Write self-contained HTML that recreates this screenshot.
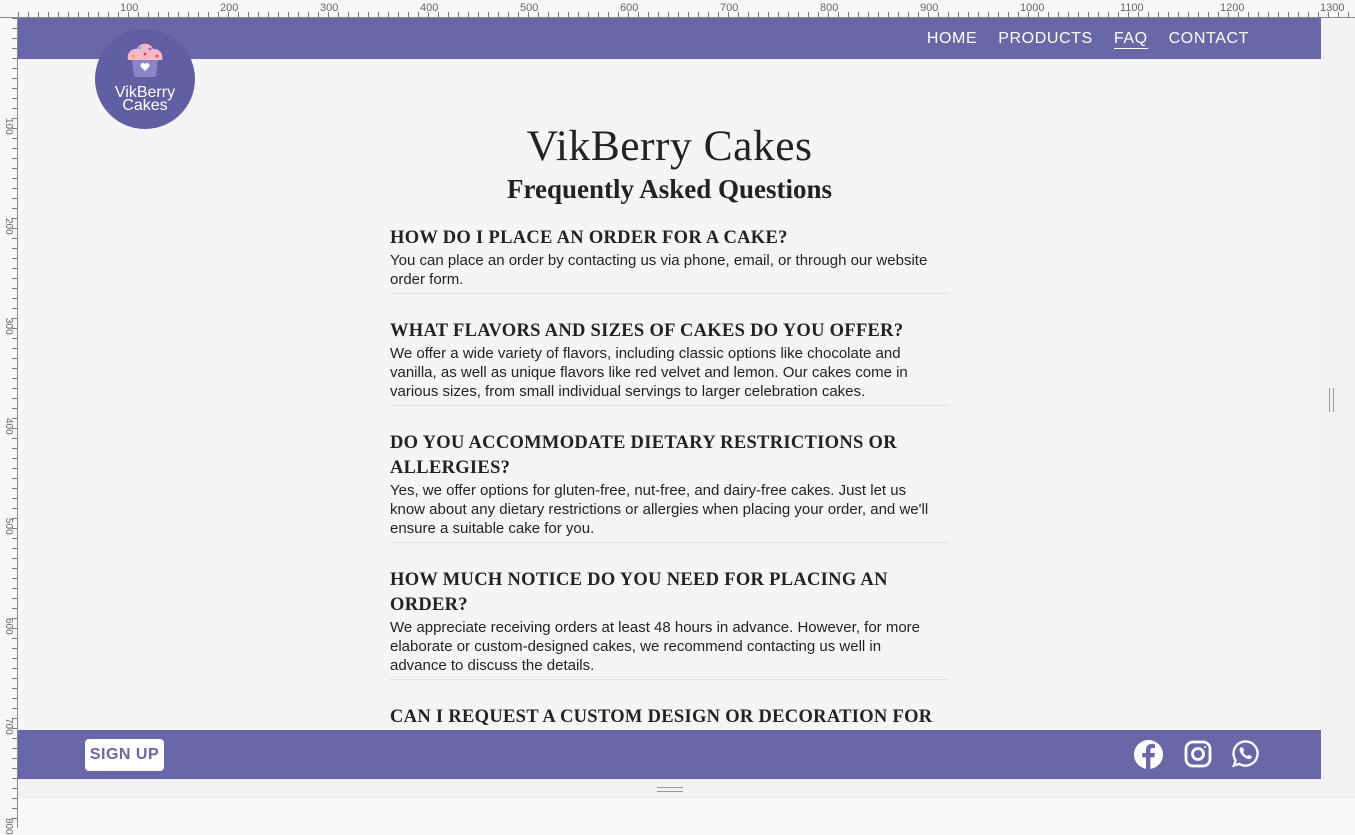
<!DOCTYPE html>
<html><head><meta charset="utf-8"><style>
*{margin:0;padding:0;box-sizing:border-box}
body{width:1355px;height:828px;overflow:hidden;background:#f9f9f9;position:relative;font-family:"Liberation Sans",sans-serif}
.rt{position:absolute;left:0;top:0;width:1355px;height:18px;background:#f7f7f7;border-bottom:1px solid #888;
background-image:repeating-linear-gradient(90deg,#777 0 1px,transparent 1px 10px);background-size:100% 6px;background-repeat:no-repeat;background-position:18px 12px}
.rl{position:absolute;left:0;top:18px;width:18px;height:810px;background:#f7f7f7;border-right:1px solid #888;
background-image:repeating-linear-gradient(180deg,#777 0 1px,transparent 1px 10px);background-size:6px 100%;background-repeat:no-repeat;background-position:12px 0}
.rt span{position:absolute;top:2px;font-size:11px;color:#666}
.rl span{position:absolute;left:2px;font-size:10px;color:#666;transform:rotate(90deg);transform-origin:left top}
.side{position:absolute;left:1321px;top:18px;width:34px;height:780px;background:#f2f2f2}
.bot{position:absolute;left:18px;top:779px;width:1303px;height:19px;background:#f2f2f2}
.page{position:absolute;left:18px;top:18px;width:1303px;height:761px;background:#f5f5f5;overflow:hidden}
.hdr{position:absolute;left:0;top:0;width:1303px;height:41px;background:#6a67a8}
.nav{position:absolute;right:72px;top:12px;color:#fff;font-size:16px;letter-spacing:.6px}
.nav span{margin-left:21px}
.nav .a{border-bottom:1px solid #fff;padding-bottom:1px}
.logo{position:absolute;left:77px;top:11px;width:100px;height:100px;border-radius:50%;background:#625ea3;color:#fff;text-align:center;font-size:16px;line-height:13px}
.h1{position:absolute;left:0;width:1303px;top:103px;text-align:center;font-family:"Liberation Serif",serif;font-size:43.5px;color:#222;letter-spacing:.5px}
.h2{position:absolute;left:0;width:1303px;top:156px;text-align:center;font-family:"Liberation Serif",serif;font-size:27px;font-weight:bold;color:#222}
.faq{position:absolute;left:372px;top:208px;width:559px}
.q{font-family:"Liberation Serif",serif;font-weight:bold;font-size:18.5px;color:#222;line-height:25px;letter-spacing:.3px}
.an{font-size:15px;line-height:19px;color:#222;padding-bottom:4px;padding-right:16px;border-bottom:1px solid #e2e2e2;margin-bottom:25px}
.ftr{position:absolute;left:0;top:712px;width:1303px;height:49px;background:#6a67a8}
.btn{position:absolute;left:67px;top:9px;width:79px;height:32px;background:#fff;border-radius:4px;color:#6a67a8;font-weight:bold;font-size:16px;text-align:center;line-height:32px;letter-spacing:.5px}
</style></head><body>
<div class="rt"><span style="left:120px">100</span><span style="left:220px">200</span><span style="left:320px">300</span><span style="left:420px">400</span><span style="left:520px">500</span><span style="left:620px">600</span><span style="left:720px">700</span><span style="left:820px">800</span><span style="left:920px">900</span><span style="left:1020px">1000</span><span style="left:1120px">1100</span><span style="left:1220px">1200</span><span style="left:1320px">1300</span></div>
<div class="rl"><span style="top:100px;left:14px">100</span><span style="top:200px;left:14px">200</span><span style="top:300px;left:14px">300</span><span style="top:400px;left:14px">400</span><span style="top:500px;left:14px">500</span><span style="top:600px;left:14px">600</span><span style="top:700px;left:14px">700</span><span style="top:800px;left:14px">800</span></div>
<div class="side"><div style="position:absolute;left:8px;top:370px;width:5px;height:24px;border-left:1px solid #999;border-right:1px solid #999"></div></div>
<div class="bot"><div style="position:absolute;left:639px;top:8px;width:26px;height:5px;border-top:1px solid #999;border-bottom:1px solid #999"></div></div>
<div class="page">
<div class="hdr"><div class="nav"><span>HOME</span><span>PRODUCTS</span><span class="a">FAQ</span><span>CONTACT</span></div></div>
<div class="logo">
<svg width="40" height="40" viewBox="0 0 40 40" style="margin-top:11px;display:block;margin-left:30px"><path d="M3 20 C1 12 8 8 12 9 C14 2 26 2 28 9 C32 8 39 12 37 20 Z" fill="#f9b8c8"/><path d="M7 20 h26 l-2 15 a2 2 0 0 1-2 2 h-18 a2 2 0 0 1-2-2z" fill="#8a86c6"/><path d="M20 31 l-4-4 a2.4 2.4 0 0 1 4-3 a2.4 2.4 0 0 1 4 3z" fill="#fff"/><circle cx="15" cy="8" r="1.4" fill="#3cc"/><circle cx="25" cy="9" r="1.4" fill="#66c"/><circle cx="8" cy="16" r="1.4" fill="#f90"/><circle cx="20" cy="14" r="1.4" fill="#e33"/><circle cx="32" cy="16" r="1.4" fill="#e36"/></svg>
<div style="margin-top:6px">VikBerry<br>Cakes</div></div>
<div class="h1">VikBerry Cakes</div>
<div class="h2">Frequently Asked Questions</div>
<div class="faq">
<div class="q">HOW DO I PLACE AN ORDER FOR A CAKE?</div>
<div class="an">You can place an order by contacting us via phone, email, or through our website order form.</div>
<div class="q">WHAT FLAVORS AND SIZES OF CAKES DO YOU OFFER?</div>
<div class="an">We offer a wide variety of flavors, including classic options like chocolate and vanilla, as well as unique flavors like red velvet and lemon. Our cakes come in various sizes, from small individual servings to larger celebration cakes.</div>
<div class="q">DO YOU ACCOMMODATE DIETARY RESTRICTIONS OR ALLERGIES?</div>
<div class="an">Yes, we offer options for gluten-free, nut-free, and dairy-free cakes. Just let us know about any dietary restrictions or allergies when placing your order, and we'll ensure a suitable cake for you.</div>
<div class="q">HOW MUCH NOTICE DO YOU NEED FOR PLACING AN ORDER?</div>
<div class="an">We appreciate receiving orders at least 48 hours in advance. However, for more elaborate or custom-designed cakes, we recommend contacting us well in advance to discuss the details.</div>
<div class="q">CAN I REQUEST A CUSTOM DESIGN OR DECORATION FOR MY CAKE?</div>
</div>
<div class="ftr"><div class="btn">SIGN UP</div>
<svg style="position:absolute;left:1115px;top:9px" width="31" height="31" viewBox="0 0 32 32"><circle cx="16" cy="16" r="15" fill="#fff"/><path d="M18 31 V19 h4 l.6-4.5 H18 v-3 c0-1.3.4-2.2 2.3-2.2 h2.4 V5.4 c-.4 0-1.8-.2-3.5-.2-3.5 0-5.8 2.1-5.8 6 v3.3 H9.5 V19 h3.9 v12z" fill="#6a67a8"/></svg>
<svg style="position:absolute;left:1166px;top:10px" width="28" height="28" viewBox="0 0 28 28" fill="none" stroke="#fff" stroke-width="2.8"><rect x="2" y="2" width="24" height="24" rx="7"/><circle cx="14" cy="14" r="5.5"/><circle cx="21" cy="7" r="1" fill="#fff" stroke="none"/></svg>
<svg style="position:absolute;left:1213px;top:9px" width="29" height="29" viewBox="0 0 30 30"><path d="M15 2.5 A12.5 12.5 0 1 1 8.5 25.7 L3 27.5 l1.8-5.3 A12.5 12.5 0 0 1 15 2.5z" fill="none" stroke="#fff" stroke-width="2.4"/><path d="M10.5 9 c.6-.6 1.5-.6 1.9.2 l1 2.2 c.2.5 0 1-.4 1.4 l-.6.6 c.9 1.9 2.4 3.4 4.3 4.3 l.6-.6 c.4-.4.9-.6 1.4-.4 l2.2 1 c.8.4.8 1.300.2 1.9 -1.2 1.3-3 1.6-5.2.5 -2.7-1.4-4.9-3.6-6.3-6.3 -1.1-2.2-.8-4 .5-5.2z" fill="#fff"/></svg>
</div>
</div>
</body></html>
